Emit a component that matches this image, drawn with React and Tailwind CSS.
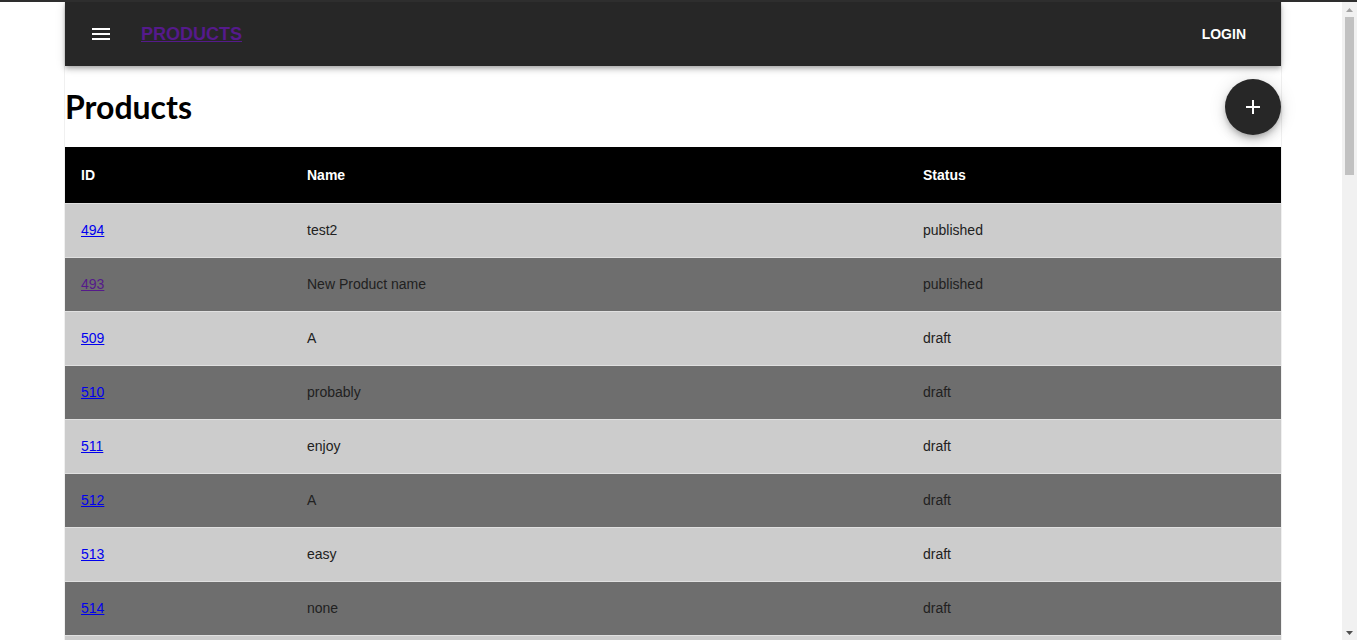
import React from "react";

const rows = [
  ["494", "test2", "published", false],
  ["493", "New Product name", "published", true],
  ["509", "A", "draft"],
  ["510", "probably", "draft"],
  ["511", "enjoy", "draft"],
  ["512", "A", "draft"],
  ["513", "easy", "draft"],
  ["514", "none", "draft"],
];

export default function App() {
  return (
    <div className="bg-white h-[640px] overflow-hidden flex flex-col" style={{ fontFamily: '"Liberation Sans", Arial, sans-serif' }}>
      <div className="h-[2px] bg-[#2e2e2e] shrink-0" />
      <div className="flex flex-1 min-h-0">
        <div className="flex-1 min-w-0 overflow-hidden">
          <div className="ml-[64px] w-[1218px] border-x border-[#f0f0f0]">
            <header className="h-16 bg-[#272727] flex items-center pl-6 pr-[24px] shadow-[0_2px_4px_-1px_rgba(0,0,0,0.2),0_4px_5px_0_rgba(0,0,0,0.14),0_1px_10px_0_rgba(0,0,0,0.12)] relative z-10">
              <svg width="24" height="24" viewBox="0 0 24 24" className="fill-white">
                <path d="M3 18h18v-2H3v2zm0-5h18v-2H3v2zm0-7v2h18V6H3z" />
              </svg>
              <a href="#" className="ml-[28px] text-[18px] font-bold text-[#551a8b] underline leading-none">PRODUCTS</a>
              <div className="flex-1" />
              <button className="text-white text-[14px] font-bold px-[11px]">LOGIN</button>
            </header>
            <div className="h-[81px] flex items-center justify-between">
              <h1 className="text-[32px] font-bold text-black leading-none" style={{ fontFamily: 'Lato, "Open Sans", sans-serif' }}>Products</h1>
              <button className="w-14 h-14 rounded-full bg-[#272727] flex items-center justify-center shadow-[0_3px_5px_-1px_rgba(0,0,0,0.2),0_6px_10px_0_rgba(0,0,0,0.14),0_1px_18px_0_rgba(0,0,0,0.12)]">
                <svg width="24" height="24" viewBox="0 0 24 24" className="fill-white">
                  <path d="M19 13h-6v6h-2v-6H5v-2h6V5h2v6h6v2z" />
                </svg>
              </button>
            </div>
            <table className="w-full border-collapse text-[14px]">
              <thead>
                <tr className="bg-black h-[56px] border-b border-[#e0e0e0]">
                  <th className="text-left text-white font-bold px-4 pt-[2px] w-[226px]">ID</th>
                  <th className="text-left text-white font-bold px-4 pt-[2px] w-[616px]">Name</th>
                  <th className="text-left text-white font-bold px-4 pt-[2px]">Status</th>
                </tr>
              </thead>
              <tbody>
                {rows.map((r, i) => (
                  <tr key={r[0]} className={(i % 2 === 0 ? "bg-[#cccccc]" : "bg-[#6e6e6e]") + " h-[54px] border-b border-[#e0e0e0]"}>
                    <td className="px-4">
                      <a href="#" className={r[3] ? "text-[#551a8b] underline" : "text-[#0000ee] underline"}>{r[0]}</a>
                    </td>
                    <td className="px-4 text-[#212121]">{r[1]}</td>
                    <td className="px-4 text-[#212121]">{r[2]}</td>
                  </tr>
                ))}
                <tr className="bg-[#cccccc] h-[54px]">
                  <td></td>
                  <td></td>
                  <td></td>
                </tr>
              </tbody>
            </table>
          </div>
        </div>
        <div className="w-[15px] shrink-0 bg-[#f1f1f1] flex flex-col items-center">
          <div className="h-[15px] flex items-center justify-center">
            <svg width="7" height="4" viewBox="0 0 7 4"><path d="M0 4 L3.5 0 L7 4 Z" fill="#a3a3a3" /></svg>
          </div>
          <div className="w-[9px] h-[158px] bg-[#c1c1c1]" />
          <div className="flex-1" />
          <div className="h-[15px] flex items-center justify-center">
            <svg width="7" height="4" viewBox="0 0 7 4"><path d="M0 0 L7 0 L3.5 4 Z" fill="#505050" /></svg>
          </div>
        </div>
      </div>
    </div>
  );
}
